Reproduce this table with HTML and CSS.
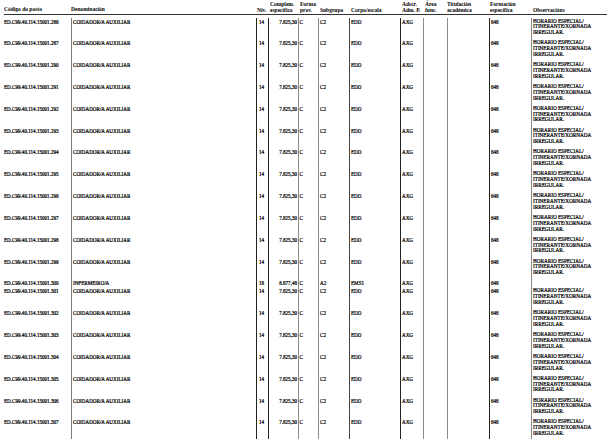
FILE: index.html
```html
<!DOCTYPE html>
<html lang="gl">
<head>
<meta charset="utf-8">
<title>Relación de postos</title>
<link rel="stylesheet" href="styles.css">
</head>
<body>
<div class="sheet">
  <div class="head">
    <div class="h h-single">Código do posto</div>
    <div class="h h-single">Denominación</div>
    <div class="h h-niv">Niv.</div>
    <div class="h h-comp"><span>Complem.</span><span>específico</span></div>
    <div class="h h-forma"><span>Forma</span><span>prov.</span></div>
    <div class="h h-sub">Subgrupo</div>
    <div class="h h-corpo">Corpo/escala</div>
    <div class="h h-adscr"><span>Adscr.</span><span>Adm. P.</span></div>
    <div class="h h-area"><span>Área</span><span>func.</span></div>
    <div class="h h-tit"><span>Titulación</span><span>académica</span></div>
    <div class="h h-form"><span>Formación</span><span>específica</span></div>
    <div class="h h-obs">Observacións</div>
  </div>
  <div class="body">
    <div class="row"><div class="c code">ED.C99.40.114.15001.286</div><div class="c den">COIDADOR/A AUXILIAR</div><div class="c niv">14</div><div class="c comp">7.825,30</div><div class="c forma">C</div><div class="c sub">C2</div><div class="c corpo">EDD</div><div class="c adscr">AXG</div><div class="c area"></div><div class="c tit"></div><div class="c form">648</div><div class="c obs">HORARIO ESPECIAL/<br>ITINERANTE/XORNADA<br>IRREGULAR.</div></div>
    <div class="row"><div class="c code">ED.C99.40.114.15001.287</div><div class="c den">COIDADOR/A AUXILIAR</div><div class="c niv">14</div><div class="c comp">7.825,30</div><div class="c forma">C</div><div class="c sub">C2</div><div class="c corpo">EDD</div><div class="c adscr">AXG</div><div class="c area"></div><div class="c tit"></div><div class="c form">648</div><div class="c obs">HORARIO ESPECIAL/<br>ITINERANTE/XORNADA<br>IRREGULAR.</div></div>
    <div class="row"><div class="c code">ED.C99.40.114.15001.290</div><div class="c den">COIDADOR/A AUXILIAR</div><div class="c niv">14</div><div class="c comp">7.825,30</div><div class="c forma">C</div><div class="c sub">C2</div><div class="c corpo">EDD</div><div class="c adscr">AXG</div><div class="c area"></div><div class="c tit"></div><div class="c form">648</div><div class="c obs">HORARIO ESPECIAL/<br>ITINERANTE/XORNADA<br>IRREGULAR.</div></div>
    <div class="row"><div class="c code">ED.C99.40.114.15001.291</div><div class="c den">COIDADOR/A AUXILIAR</div><div class="c niv">14</div><div class="c comp">7.825,30</div><div class="c forma">C</div><div class="c sub">C2</div><div class="c corpo">EDD</div><div class="c adscr">AXG</div><div class="c area"></div><div class="c tit"></div><div class="c form">648</div><div class="c obs">HORARIO ESPECIAL/<br>ITINERANTE/XORNADA<br>IRREGULAR.</div></div>
    <div class="row"><div class="c code">ED.C99.40.114.15001.292</div><div class="c den">COIDADOR/A AUXILIAR</div><div class="c niv">14</div><div class="c comp">7.825,30</div><div class="c forma">C</div><div class="c sub">C2</div><div class="c corpo">EDD</div><div class="c adscr">AXG</div><div class="c area"></div><div class="c tit"></div><div class="c form">648</div><div class="c obs">HORARIO ESPECIAL/<br>ITINERANTE/XORNADA<br>IRREGULAR.</div></div>
    <div class="row"><div class="c code">ED.C99.40.114.15001.293</div><div class="c den">COIDADOR/A AUXILIAR</div><div class="c niv">14</div><div class="c comp">7.825,30</div><div class="c forma">C</div><div class="c sub">C2</div><div class="c corpo">EDD</div><div class="c adscr">AXG</div><div class="c area"></div><div class="c tit"></div><div class="c form">648</div><div class="c obs">HORARIO ESPECIAL/<br>ITINERANTE/XORNADA<br>IRREGULAR.</div></div>
    <div class="row"><div class="c code">ED.C99.40.114.15001.294</div><div class="c den">COIDADOR/A AUXILIAR</div><div class="c niv">14</div><div class="c comp">7.825,30</div><div class="c forma">C</div><div class="c sub">C2</div><div class="c corpo">EDD</div><div class="c adscr">AXG</div><div class="c area"></div><div class="c tit"></div><div class="c form">648</div><div class="c obs">HORARIO ESPECIAL/<br>ITINERANTE/XORNADA<br>IRREGULAR.</div></div>
    <div class="row"><div class="c code">ED.C99.40.114.15001.295</div><div class="c den">COIDADOR/A AUXILIAR</div><div class="c niv">14</div><div class="c comp">7.825,30</div><div class="c forma">C</div><div class="c sub">C2</div><div class="c corpo">EDD</div><div class="c adscr">AXG</div><div class="c area"></div><div class="c tit"></div><div class="c form">648</div><div class="c obs">HORARIO ESPECIAL/<br>ITINERANTE/XORNADA<br>IRREGULAR.</div></div>
    <div class="row"><div class="c code">ED.C99.40.114.15001.296</div><div class="c den">COIDADOR/A AUXILIAR</div><div class="c niv">14</div><div class="c comp">7.825,30</div><div class="c forma">C</div><div class="c sub">C2</div><div class="c corpo">EDD</div><div class="c adscr">AXG</div><div class="c area"></div><div class="c tit"></div><div class="c form">648</div><div class="c obs">HORARIO ESPECIAL/<br>ITINERANTE/XORNADA<br>IRREGULAR.</div></div>
    <div class="row"><div class="c code">ED.C99.40.114.15001.297</div><div class="c den">COIDADOR/A AUXILIAR</div><div class="c niv">14</div><div class="c comp">7.825,30</div><div class="c forma">C</div><div class="c sub">C2</div><div class="c corpo">EDD</div><div class="c adscr">AXG</div><div class="c area"></div><div class="c tit"></div><div class="c form">648</div><div class="c obs">HORARIO ESPECIAL/<br>ITINERANTE/XORNADA<br>IRREGULAR.</div></div>
    <div class="row"><div class="c code">ED.C99.40.114.15001.298</div><div class="c den">COIDADOR/A AUXILIAR</div><div class="c niv">14</div><div class="c comp">7.825,30</div><div class="c forma">C</div><div class="c sub">C2</div><div class="c corpo">EDD</div><div class="c adscr">AXG</div><div class="c area"></div><div class="c tit"></div><div class="c form">648</div><div class="c obs">HORARIO ESPECIAL/<br>ITINERANTE/XORNADA<br>IRREGULAR.</div></div>
    <div class="row"><div class="c code">ED.C99.40.114.15001.299</div><div class="c den">COIDADOR/A AUXILIAR</div><div class="c niv">14</div><div class="c comp">7.825,30</div><div class="c forma">C</div><div class="c sub">C2</div><div class="c corpo">EDD</div><div class="c adscr">AXG</div><div class="c area"></div><div class="c tit"></div><div class="c form">648</div><div class="c obs">HORARIO ESPECIAL/<br>ITINERANTE/XORNADA<br>IRREGULAR.</div></div>
    <div class="row row-short"><div class="c code">ED.C99.40.114.15001.300</div><div class="c den">INFERMEIRO/A</div><div class="c niv">18</div><div class="c comp">8.877,48</div><div class="c forma">C</div><div class="c sub">A2</div><div class="c corpo">EMS1</div><div class="c adscr">AXG</div><div class="c area"></div><div class="c tit"></div><div class="c form">648</div><div class="c obs"></div></div>
    <div class="row"><div class="c code">ED.C99.40.114.15001.301</div><div class="c den">COIDADOR/A AUXILIAR</div><div class="c niv">14</div><div class="c comp">7.825,30</div><div class="c forma">C</div><div class="c sub">C2</div><div class="c corpo">EDD</div><div class="c adscr">AXG</div><div class="c area"></div><div class="c tit"></div><div class="c form">648</div><div class="c obs">HORARIO ESPECIAL/<br>ITINERANTE/XORNADA<br>IRREGULAR.</div></div>
    <div class="row"><div class="c code">ED.C99.40.114.15001.302</div><div class="c den">COIDADOR/A AUXILIAR</div><div class="c niv">14</div><div class="c comp">7.825,30</div><div class="c forma">C</div><div class="c sub">C2</div><div class="c corpo">EDD</div><div class="c adscr">AXG</div><div class="c area"></div><div class="c tit"></div><div class="c form">648</div><div class="c obs">HORARIO ESPECIAL/<br>ITINERANTE/XORNADA<br>IRREGULAR.</div></div>
    <div class="row"><div class="c code">ED.C99.40.114.15001.303</div><div class="c den">COIDADOR/A AUXILIAR</div><div class="c niv">14</div><div class="c comp">7.825,30</div><div class="c forma">C</div><div class="c sub">C2</div><div class="c corpo">EDD</div><div class="c adscr">AXG</div><div class="c area"></div><div class="c tit"></div><div class="c form">648</div><div class="c obs">HORARIO ESPECIAL/<br>ITINERANTE/XORNADA<br>IRREGULAR.</div></div>
    <div class="row"><div class="c code">ED.C99.40.114.15001.304</div><div class="c den">COIDADOR/A AUXILIAR</div><div class="c niv">14</div><div class="c comp">7.825,30</div><div class="c forma">C</div><div class="c sub">C2</div><div class="c corpo">EDD</div><div class="c adscr">AXG</div><div class="c area"></div><div class="c tit"></div><div class="c form">648</div><div class="c obs">HORARIO ESPECIAL/<br>ITINERANTE/XORNADA<br>IRREGULAR.</div></div>
    <div class="row"><div class="c code">ED.C99.40.114.15001.305</div><div class="c den">COIDADOR/A AUXILIAR</div><div class="c niv">14</div><div class="c comp">7.825,30</div><div class="c forma">C</div><div class="c sub">C2</div><div class="c corpo">EDD</div><div class="c adscr">AXG</div><div class="c area"></div><div class="c tit"></div><div class="c form">648</div><div class="c obs">HORARIO ESPECIAL/<br>ITINERANTE/XORNADA<br>IRREGULAR.</div></div>
    <div class="row"><div class="c code">ED.C99.40.114.15001.306</div><div class="c den">COIDADOR/A AUXILIAR</div><div class="c niv">14</div><div class="c comp">7.825,30</div><div class="c forma">C</div><div class="c sub">C2</div><div class="c corpo">EDD</div><div class="c adscr">AXG</div><div class="c area"></div><div class="c tit"></div><div class="c form">648</div><div class="c obs">HORARIO ESPECIAL/<br>ITINERANTE/XORNADA<br>IRREGULAR.</div></div>
    <div class="row"><div class="c code">ED.C99.40.114.15001.307</div><div class="c den">COIDADOR/A AUXILIAR</div><div class="c niv">14</div><div class="c comp">7.825,30</div><div class="c forma">C</div><div class="c sub">C2</div><div class="c corpo">EDD</div><div class="c adscr">AXG</div><div class="c area"></div><div class="c tit"></div><div class="c form">648</div><div class="c obs">HORARIO ESPECIAL/<br>ITINERANTE/XORNADA<br>IRREGULAR.</div></div>
  </div>
</div>
</body>
</html>
```
FILE: styles.css
```css
html, body {
  margin: 0;
  padding: 0;
  background: #fff;
}
body {
  font-family: "Liberation Serif", "Times New Roman", serif;
  color: #000;
  width: 615px;
  height: 439px;
  overflow: hidden;
}
.sheet {
  padding: 0 8px 0 4px;
}
.head,
.row {
  display: grid;
  grid-template-columns: 67px 185px 12px 30px 20px 31px 51px 23px 24px 42px 42px 76px;
}
.head {
  height: 14px;
  border-bottom: 1px solid #333;
  font-weight: bold;
  font-size: 5.5px;
  line-height: 6px;
}
.h {
  display: flex;
  flex-direction: column;
  justify-content: flex-end;
  white-space: nowrap;
  padding-bottom: 1px;
}
.h-single {
  padding-bottom: 2px;
}
.h-niv { padding-left: 1px; }
.h-comp { padding-left: 2px; }
.h-forma { padding-left: 2px; }
.h-sub { padding-left: 2px; }
.h-corpo { padding-left: 2px; }
.h-adscr { padding-left: 2px; }
.h-area { padding-left: 2px; }
.h-tit { padding-left: 0; }
.h-form { padding-left: 1px; }
.h-obs { padding-left: 2px; }
.body {
  padding-top: 3px;
}
.row {
  height: 21.83px;
  font-size: 5.1px;
  line-height: 6px;
  -webkit-text-stroke: 0.22px #000;
}
.row-short {
  height: 8px;
}
.c {
  padding-top: 0.5px;
  padding-left: 1px;
  white-space: nowrap;
  overflow: hidden;
}
.code {
  padding-left: 0;
}
.den { border-left: 1px solid #7a7a7a; }
.niv { border-left: 1px solid #222; text-align: center; padding-left: 0; padding-right: 2px; }
.comp { border-left: 1px solid #222; text-align: right; padding-right: 1px; }
.forma { border-left: 1px solid #8a8a8a; padding-left: 0.5px; }
.sub { border-left: 1px solid #8a8a8a; }
.corpo { border-left: 1px solid #444; }
.adscr { border-left: 1px solid #222; }
.area { border-left: 1px solid #8a8a8a; }
.tit { border-left: 1px solid #8a8a8a; }
.form { border-left: 1px solid #222; }
.obs { border-left: 1px solid #8a8a8a; line-height: 5.8px; font-size: 5.2px; }
```
